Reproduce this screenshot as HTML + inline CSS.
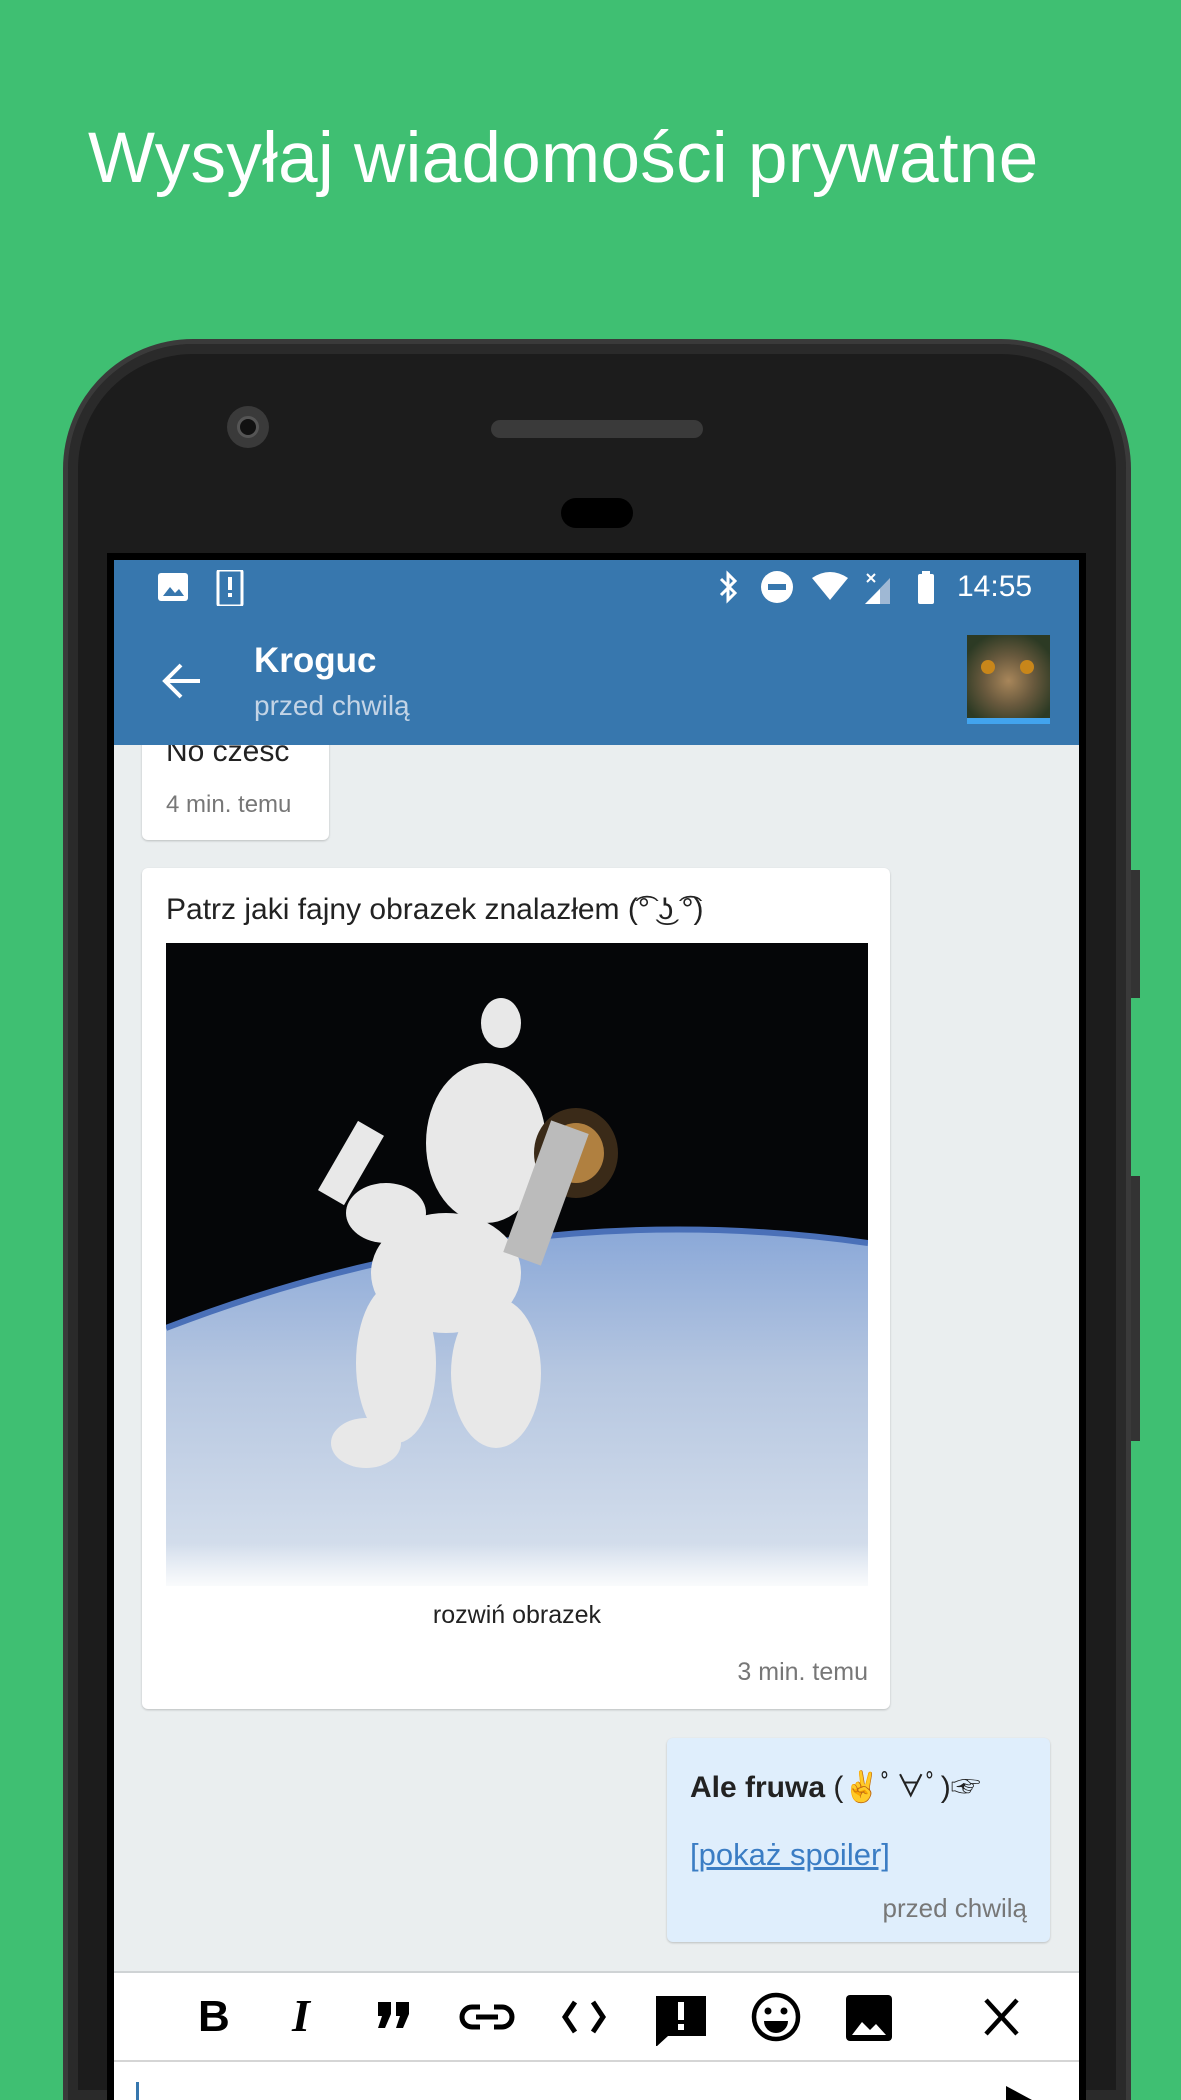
<!DOCTYPE html>
<html style="width:1181px;height:2100px;overflow:hidden"><head><meta charset="utf-8"><style>
*{margin:0;padding:0;box-sizing:border-box}
body{width:1181px;height:2100px;background:#3fbf72;position:relative;overflow:hidden;font-family:"Liberation Sans","Noto Sans CJK JP",sans-serif}
.abs{position:absolute}
.title{left:88px;top:118px;font-size:71px;color:#fff;white-space:nowrap;letter-spacing:0.3px}
.phone{left:63px;top:339px;width:1068px;height:1761px;background:#1c1c1c;border-radius:130px 130px 0 0;border:5px solid #3a3a3a;border-bottom:none;box-shadow:inset 0 0 0 10px #2a2a2a}
.screen{left:107px;top:553px;width:979px;height:1547px;background:#000}
.blue{left:114px;top:560px;width:965px;height:185px;background:#3777ae}
.chat{left:114px;top:745px;width:965px;height:1226px;background:#eaeeef;overflow:hidden}
.bub{background:#fff;border-radius:6px;box-shadow:0 1px 2px rgba(0,0,0,.2)}
.t{color:#222}
.g{color:#777}
</style></head><body>
<div class="abs title">Wysyłaj wiadomości prywatne</div>
<div class="abs phone"></div>
<div class="abs" style="left:1131px;top:870px;width:9px;height:128px;background:#333"></div>
<div class="abs" style="left:1131px;top:1176px;width:9px;height:265px;background:#333"></div>
<div class="abs" style="left:227px;top:406px;width:42px;height:42px;border-radius:50%;background:#3a3a3a"></div>
<div class="abs" style="left:237px;top:416px;width:22px;height:22px;border-radius:50%;background:#111;border:3px solid #555"></div>
<div class="abs" style="left:491px;top:420px;width:212px;height:18px;border-radius:9px;background:#3a3a3a"></div>
<div class="abs" style="left:561px;top:498px;width:72px;height:30px;border-radius:15px;background:#000"></div>
<div class="abs screen"></div>
<div class="abs chat">
  <div class="abs bub" style="left:28px;top:-45px;width:187px;height:140px"></div>
  <div class="abs t" style="left:52px;top:-10px;font-size:30px">No czesc</div>
  <div class="abs g" style="left:52px;top:46px;font-size:24px">4 min. temu</div>
</div>
<div class="abs blue"></div>
<svg class="abs" style="left:158px;top:570px" width="100" height="36" viewBox="0 0 100 36">
<rect x="0" y="3" width="30" height="28" rx="3" fill="#fff"/><path d="M5 26 L12 17 L17 23 L21 19 L26 26Z" fill="#3777ae"/>
<rect x="60" y="0" width="24" height="36" rx="2" fill="none" stroke="#fff" stroke-width="3"/><rect x="70" y="7" width="4" height="13" fill="#fff"/><rect x="70" y="23" width="4" height="4" fill="#fff"/>
</svg>
<svg class="abs" style="left:715px;top:570px" width="230" height="36" viewBox="0 0 230 36">
<path d="M6 9 L20 23 L13 30 L13 4 L20 11 L6 25" fill="none" stroke="#fff" stroke-width="3"/>
<circle cx="62" cy="17" r="16" fill="#fff"/><rect x="53" y="14" width="18" height="6" fill="#3777ae"/>
<path d="M97 8 Q115 -4 133 8 L115 30Z" fill="#fff"/>
<path d="M150 34 L175 8 L175 34Z" fill="#9fb8d4"/><path d="M150 34 L165 19 L165 34Z" fill="#fff"/><path d="M152 4 L160 12 M160 4 L152 12" stroke="#fff" stroke-width="2"/>
<rect x="203" y="4" width="16" height="30" rx="2" fill="#fff"/><rect x="207" y="1" width="8" height="4" fill="#fff"/>
</svg>
<div class="abs" style="left:957px;top:570px;font-size:30px;color:#fff">14:55</div>
<svg class="abs" style="left:160px;top:660px" width="42" height="42" viewBox="0 0 42 42"><path d="M40 21 H5 M21 5 L5 21 L21 37" fill="none" stroke="#fff" stroke-width="4"/></svg>
<div class="abs" style="left:254px;top:641px;font-size:35px;color:#fff;font-weight:bold">Kroguc</div>
<div class="abs" style="left:254px;top:690px;font-size:28px;color:#c3d4e6">przed chwilą</div>
<div class="abs" style="left:967px;top:635px;width:83px;height:83px;background:radial-gradient(circle at 50% 55%,#a8865a 0,#6a5a3e 40%,#2c3a24 80%)"></div>
<div class="abs" style="left:981px;top:660px;width:14px;height:14px;border-radius:50%;background:#c8861a"></div>
<div class="abs" style="left:1020px;top:660px;width:14px;height:14px;border-radius:50%;background:#c8861a"></div>
<div class="abs" style="left:967px;top:718px;width:83px;height:6px;background:#42a4ee"></div>
<div class="abs bub" style="left:142px;top:868px;width:748px;height:841px"></div>
<div class="abs t" style="left:166px;top:893px;font-size:30px;white-space:nowrap">Patrz jaki fajny obrazek znalazłem (͡° ͜ʖ ͡°)</div>
<svg class="abs" style="left:166px;top:943px" width="702" height="700" viewBox="0 0 702 700">
<defs><linearGradient id="e" x1="0" y1="0" x2="0" y2="1"><stop offset="0" stop-color="#8aa8d8"/><stop offset=".4" stop-color="#b5c6e0"/><stop offset="1" stop-color="#d9e2ee"/></linearGradient>
<linearGradient id="f" x1="0" y1="0" x2="0" y2="1"><stop offset="0" stop-color="#fff" stop-opacity="0"/><stop offset="1" stop-color="#fff"/></linearGradient></defs>
<rect width="702" height="643" fill="#050608"/>
<path d="M0 385 Q350 250 702 300 L702 643 L0 643Z" fill="url(#e)"/>
<path d="M0 385 Q350 250 702 300" fill="none" stroke="#4a70b8" stroke-width="6"/>
<g fill="#e8e8e8"><ellipse cx="320" cy="200" rx="60" ry="80"/><ellipse cx="280" cy="330" rx="75" ry="60"/><ellipse cx="230" cy="420" rx="40" ry="80"/><ellipse cx="330" cy="430" rx="45" ry="75"/><ellipse cx="200" cy="500" rx="35" ry="25"/><ellipse cx="220" cy="270" rx="40" ry="30"/><rect x="170" y="180" width="30" height="80" transform="rotate(30 185 220)"/><ellipse cx="335" cy="80" rx="20" ry="25"/></g>
<ellipse cx="410" cy="210" rx="42" ry="45" fill="#3a2a18"/><ellipse cx="410" cy="210" rx="28" ry="30" fill="#b08040"/>
<rect x="360" y="180" width="40" height="140" fill="#bbb" transform="rotate(20 380 250)"/>
<rect x="0" y="643" width="702" height="57" fill="#fff"/><rect x="0" y="600" width="702" height="50" fill="url(#f)"/>
</svg>
<div class="abs t" style="left:166px;top:1601px;width:702px;text-align:center;font-size:25px">rozwiń obrazek</div>
<div class="abs g" style="left:600px;top:1658px;width:268px;text-align:right;font-size:25px">3 min. temu</div>
<div class="abs bub" style="left:667px;top:1738px;width:383px;height:204px;background:#dfeefc"></div>
<div class="abs t" style="left:690px;top:1762px;font-size:30px;white-space:nowrap"><b>Ale fruwa</b> (✌ﾟ∀ﾟ)☞</div>
<div class="abs" style="left:690px;top:1837px;font-size:31px;color:#3b7dc4;text-decoration:underline">[pokaż spoiler]</div>
<div class="abs g" style="left:800px;top:1893px;width:227px;text-align:right;font-size:26px">przed chwilą</div>
<div class="abs" style="left:114px;top:1971px;width:965px;height:129px;background:#fff;border-top:2px solid #cfd3d5"></div>
<div class="abs" style="left:114px;top:2060px;width:965px;height:2px;background:#d5d5d5"></div>
<svg class="abs" style="left:190px;top:1990px" width="840" height="56" viewBox="0 0 840 56">
<text x="8" y="41" font-family="Liberation Sans" font-weight="bold" font-size="44">B</text>
<text x="102" y="41" font-family="Liberation Serif" font-weight="bold" font-style="italic" font-size="46">I</text>
<path d="M188 12h13v12l-6 14h-7l4-12h-4z M206 12h13v12l-6 14h-7l4-12h-4z"/>
<g fill="none" stroke="#000" stroke-width="5"><path d="M290 17h-8a10 10 0 0 0 0 20h8 M304 17h8a10 10 0 0 1 0 20h-8 M286 27h22"/>
<path d="M385 12 L375 27 L385 42 M403 12 L413 27 L403 42"/></g>
<path d="M466 6h50v40h-38l-12 11z" /><rect x="488" y="12" width="6" height="18" fill="#fff"/><rect x="488" y="34" width="6" height="6" fill="#fff"/>
<circle cx="586" cy="27" r="22" fill="none" stroke="#000" stroke-width="4.5"/><circle cx="578" cy="21" r="3.5"/><circle cx="594" cy="21" r="3.5"/><path d="M574 31h24a12 12 0 0 1-24 0z"/>
<rect x="656" y="5" width="46" height="46" rx="4"/><path d="M662 45 L672 32 L680 40 L686 34 L696 45z" fill="#fff"/>
<path d="M796 10 L827 44 M827 10 L796 44" stroke="#000" stroke-width="4.5"/>
</svg>
<div class="abs" style="left:136px;top:2082px;width:3px;height:18px;background:#3777ae"></div>
<svg class="abs" style="left:1004px;top:2086px" width="30" height="14"><path d="M2 0 L28 14 L2 14z"/></svg>
</body></html>
